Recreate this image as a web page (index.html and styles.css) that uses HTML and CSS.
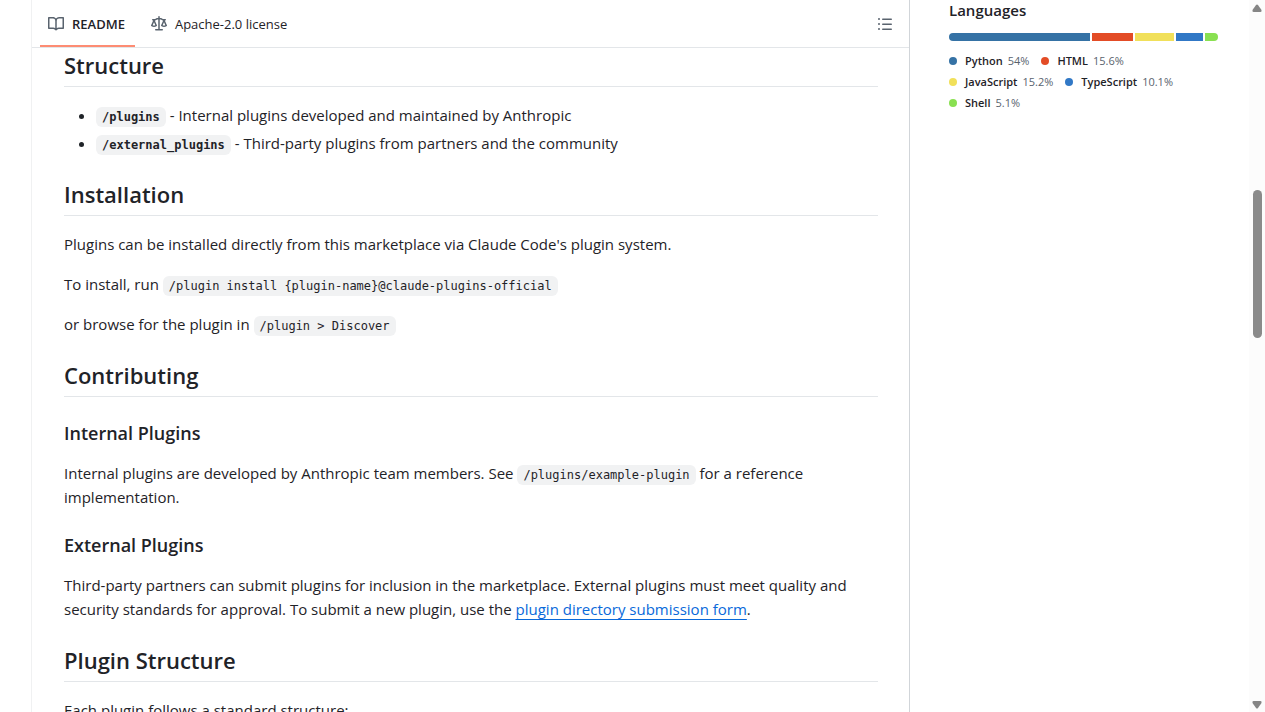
FILE: index.html
```html
<!DOCTYPE html>
<html lang="en">
<head>
<meta charset="utf-8">
<title>README</title>
<link rel="stylesheet" href="styles.css">
</head>
<body>
<div class="page">
  <main class="readme">
    <header class="tabs">
      <nav class="tab-list" aria-label="Repository files">
        <a class="tab tab-active" href="#readme" aria-current="page">
          <svg class="icon" viewBox="0 0 16 16" aria-hidden="true"><path d="M0 1.75A.75.75 0 0 1 .75 1h4.253c1.227 0 2.317.59 3 1.501A3.743 3.743 0 0 1 11.006 1h4.245a.75.75 0 0 1 .75.75v10.5a.75.75 0 0 1-.75.75h-4.507a2.25 2.25 0 0 0-1.591.659l-.622.621a.75.75 0 0 1-1.06 0l-.622-.621A2.25 2.25 0 0 0 5.258 13H.75a.75.75 0 0 1-.75-.75Zm7.251 10.324.004-5.073-.002-2.253A2.25 2.25 0 0 0 5.003 2.5H1.5v9h3.757a3.75 3.75 0 0 1 1.994.574ZM8.755 4.75l-.004 7.322a3.752 3.752 0 0 1 1.992-.572H14.5v-9h-3.495a2.25 2.25 0 0 0-2.25 2.25Z"/></svg>
          README
        </a>
        <a class="tab" href="#license">
          <svg class="icon" viewBox="0 0 16 16" aria-hidden="true"><path d="M8.75.75V2h.985c.304 0 .603.08.867.231l1.29.736c.038.022.08.033.124.033h2.234a.75.75 0 0 1 0 1.5h-.427l2.111 4.692a.75.75 0 0 1-.154.838l-.53-.53.529.531-.001.002-.002.002-.006.006-.006.005-.01.01-.045.04c-.21.176-.441.327-.686.45C14.556 10.78 13.88 11 13 11a4.498 4.498 0 0 1-2.023-.454 3.544 3.544 0 0 1-.686-.45l-.045-.04-.016-.015-.006-.006-.004-.004v-.001a.75.75 0 0 1-.154-.838L12.178 4.5h-.162c-.305 0-.604-.079-.868-.231l-1.29-.736a.245.245 0 0 0-.124-.033H8.75V13h2.5a.75.75 0 0 1 0 1.5h-6.5a.75.75 0 0 1 0-1.5h2.5V3.5h-.984a.245.245 0 0 0-.124.033l-1.289.737c-.265.15-.564.23-.869.23h-.162l2.112 4.692a.75.75 0 0 1-.154.838l-.53-.53.529.531-.001.002-.002.002-.006.006-.016.015-.045.04c-.21.176-.441.327-.686.45C4.556 10.78 3.88 11 3 11a4.498 4.498 0 0 1-2.023-.454 3.544 3.544 0 0 1-.686-.45l-.045-.04-.016-.015-.006-.006-.004-.004v-.001a.75.75 0 0 1-.154-.838L2.178 4.5H1.75a.75.75 0 0 1 0-1.5h2.234a.249.249 0 0 0 .125-.033l1.288-.737c.265-.15.564-.23.869-.23h.984V.75a.75.75 0 0 1 1.5 0Zm2.945 8.477c.285.135.718.273 1.305.273s1.02-.138 1.305-.273L13 6.327Zm-10 0c.285.135.718.273 1.305.273s1.02-.138 1.305-.273L3 6.327Z"/></svg>
          Apache-2.0 license
        </a>
      </nav>
      <button class="outline-button" type="button" aria-label="Outline">
        <svg class="icon" viewBox="0 0 16 16" aria-hidden="true"><path d="M5.75 2.5h8.5a.75.75 0 0 1 0 1.5h-8.5a.75.75 0 0 1 0-1.5Zm0 5h8.5a.75.75 0 0 1 0 1.5h-8.5a.75.75 0 0 1 0-1.5Zm0 5h8.5a.75.75 0 0 1 0 1.5h-8.5a.75.75 0 0 1 0-1.5ZM2 14a1 1 0 1 1 0-2 1 1 0 0 1 0 2Zm1-6a1 1 0 1 1-2 0 1 1 0 0 1 2 0ZM2 4a1 1 0 1 1 0-2 1 1 0 0 1 0 2Z"/></svg>
      </button>
    </header>
    <article class="prose">
      <h2>Structure</h2>
      <ul>
        <li><strong><code>/plugins</code></strong> - Internal plugins developed and maintained by Anthropic</li>
        <li><strong><code>/external_plugins</code></strong> - Third-party plugins from partners and the community</li>
      </ul>
      <h2>Installation</h2>
      <p>Plugins can be installed directly from this marketplace via Claude Code's plugin system.</p>
      <p>To install, run <code>/plugin install {plugin-name}@claude-plugins-official</code></p>
      <p>or browse for the plugin in <code>/plugin &gt; Discover</code></p>
      <h2>Contributing</h2>
      <h3>Internal Plugins</h3>
      <p>Internal plugins are developed by Anthropic team members. See <code>/plugins/example-plugin</code> for a reference implementation.</p>
      <h3>External Plugins</h3>
      <p>Third-party partners can submit plugins for inclusion in the marketplace. External plugins must meet quality and security standards for approval. To submit a new plugin, use the <a href="#form">plugin directory submission form</a>.</p>
      <h2>Plugin Structure</h2>
      <p>Each plugin follows a standard structure:</p>
    </article>
  </main>
  <aside class="sidebar">
    <h2 class="sidebar-title">Languages</h2>
    <div class="language-bar">
      <span class="segment python" style="flex-grow:54"></span>
      <span class="segment html" style="flex-grow:15.6"></span>
      <span class="segment javascript" style="flex-grow:15.2"></span>
      <span class="segment typescript" style="flex-grow:10.1"></span>
      <span class="segment shell" style="flex-grow:5.1"></span>
    </div>
    <ul class="language-list">
      <li><span class="dot python"></span><b>Python</b> 54%</li>
      <li><span class="dot html"></span><b>HTML</b> 15.6%</li>
      <li><span class="dot javascript"></span><b>JavaScript</b> 15.2%</li>
      <li><span class="dot typescript"></span><b>TypeScript</b> 10.1%</li>
      <li><span class="dot shell"></span><b>Shell</b> 5.1%</li>
    </ul>
  </aside>
  <div class="scrollbar" aria-hidden="true">
    <svg class="arrow" viewBox="0 0 10 8"><path d="M4 1Q5 0 6 1L9.500 6Q10 8 8.500 8H1.500Q0 8 .5 6Z"/></svg>
    <div class="track"><div class="thumb"></div></div>
    <svg class="arrow" viewBox="0 0 10 8"><path d="M4 7Q5 8 6 7L9.500 2Q10 0 8.500 0H1.500Q0 0 .5 2Z"/></svg>
  </div>
</div>
</body>
</html>
```
FILE: styles.css
```css
* { box-sizing: border-box; }

body {
  margin: 0;
  background: #fff;
  color: #1f2328;
  font-family: "Open Sans", "Noto Sans", sans-serif;
  font-size: 15px;
  line-height: 24px;
}

.page {
  display: flex;
  height: 100vh;
  overflow: hidden;
}

.readme {
  flex: 1;
  min-width: 0;
  margin-left: 31px;
  border-left: 1px solid #f0f1f2;
  border-right: 1px solid #d1d5d9;
}

.tabs {
  display: flex;
  align-items: center;
  justify-content: space-between;
  height: 48px;
  padding: 0 16px 0 8px;
  border-bottom: 1px solid #e3e6e9;
}

.tab-list { display: flex; align-self: stretch; gap: 8px; }

.tab {
  display: flex;
  align-items: center;
  gap: 8px;
  padding: 2px 10px 0 8px;
  border-bottom: 2px solid transparent;
  color: #1f2328;
  font-size: 13px;
  text-decoration: none;
}

.tab-active { border-color: #fd8c73; font-weight: 600; }

.icon { width: 16px; height: 16px; fill: #59636e; }

.outline-button {
  display: flex;
  padding: 0;
  border: 0;
  background: none;
}

.prose { padding: 2px 31px 0 32px; }

.prose h2 {
  margin: 24px 0 16px;
  padding-bottom: 6px;
  border-bottom: 1px solid #e3e6e9;
  font-size: 22px;
  font-weight: 600;
  line-height: 30px;
}

.prose h2:first-child { margin-top: 0; }

.prose h3 {
  margin: 24px 0 16px;
  font-size: 18px;
  font-weight: 600;
  line-height: 24px;
}

.prose p { margin: 0 0 16px; }

.prose ul { margin: 0 0 16px; padding-left: 32px; }

.prose li + li { margin-top: 4px; }

.prose code {
  padding: 3px 6px;
  border-radius: 6px;
  background: #f1f2f3;
  font-family: "DejaVu Sans Mono", monospace;
  font-size: 12px;
  line-height: 16px;
}

.prose a {
  color: #0969da;
  text-decoration: underline;
  text-decoration-thickness: 1px;
  text-underline-offset: 4px;
}

.sidebar { width: 269px; margin: 0 31px 0 39px; }

.sidebar-title {
  margin: 0 0 12px;
  font-size: 15px;
  font-weight: 600;
  line-height: 21px;
}

.language-bar {
  display: flex;
  gap: 2px;
  height: 8px;
  margin-bottom: 9px;
  border-radius: 6px;
  overflow: hidden;
}

.segment { flex-basis: 0; }

.python { background: #3572a5; }
.html { background: #e34c26; }
.javascript { background: #f1e05a; }
.typescript { background: #3178c6; }
.shell { background: #89e051; }

.language-list {
  display: flex;
  flex-wrap: wrap;
  column-gap: 12px;
  margin: 0;
  padding: 0;
  list-style: none;
  color: #59636e;
  font-size: 11px;
  line-height: 21px;
}

.language-list li { display: flex; align-items: center; gap: 5px; }
.language-list b { color: #1f2328; font-weight: 600; }

.dot { width: 8px; height: 8px; margin-right: 3px; border-radius: 50%; }

.scrollbar {
  display: flex;
  flex-direction: column;
  align-items: center;
  width: 16px;
  padding: 4px 0 3px;
  background: #fcfcfc;
}

.arrow { width: 10px; height: 8px; fill: #858585; }

.track { flex: 1; padding-top: 178px; }

.thumb {
  width: 9px;
  height: 148px;
  border-radius: 5px;
  background: #8a8a8a;
}
```
